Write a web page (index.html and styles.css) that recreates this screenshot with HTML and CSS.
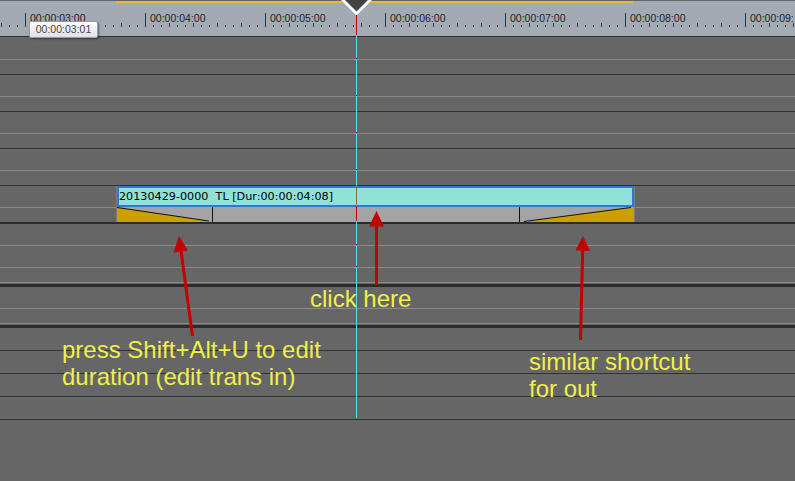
FILE: index.html
```html
<!DOCTYPE html>
<html lang="en">
<head>
  <meta charset="UTF-8">
  <meta name="viewport" content="width=device-width, initial-scale=1.0">
  <title>Timeline - trans in</title>
  <link rel="stylesheet" href="styles.css">
</head>
<body>
  <div class="editor">
    <div class="ruler">
      <div class="ruler-range"></div>
      <div class="ruler-scale">
        <div class="sec"></div>
        <div class="sec"><span>00:00:03:00</span></div>
        <div class="sec"><span>00:00:04:00</span></div>
        <div class="sec"><span>00:00:05:00</span></div>
        <div class="sec"><span>00:00:06:00</span></div>
        <div class="sec"><span>00:00:07:00</span></div>
        <div class="sec"><span>00:00:08:00</span></div>
        <div class="sec sec-last"><span>00:00:09:</span></div>
      </div>
    </div>
    <div class="time-tip">00:00:03:01</div>

    <div class="tracks">
      <div class="track track-first">
        <div class="lane"></div>
        <div class="lane lane-sub"></div>
      </div>
      <div class="track">
        <div class="lane"></div>
        <div class="lane lane-sub"></div>
      </div>
      <div class="track">
        <div class="lane"></div>
        <div class="lane lane-sub"></div>
      </div>
      <div class="track">
        <div class="lane"></div>
        <div class="lane lane-sub"></div>
      </div>

      <!-- pista con el clip -->
      <div class="track track-clip">
        <div class="lane"></div>
        <div class="lane lane-sub"></div>
        <div class="clip">
          <div class="clip-body">20130429-0000&nbsp; TL [Dur:00:00:04:08]</div>
          <div class="clip-trans">
            <div class="trans-in">
              <svg width="95" height="15" viewBox="0 0 95 15">
                <polygon points="0,0 0,15 93,15" fill="#c9a100"/>
                <line x1="0" y1="0.5" x2="92" y2="14" stroke="#111" stroke-width="1"/>
              </svg>
            </div>
            <div class="trans-mid"></div>
            <div class="trans-out">
              <svg width="114" height="15" viewBox="0 0 114 15">
                <polygon points="4,15 111,0 114,0 114,15" fill="#c9a100"/>
                <line x1="4" y1="14.5" x2="111" y2="0.5" stroke="#111" stroke-width="1"/>
              </svg>
            </div>
          </div>
        </div>
      </div>

      <div class="track track-group">
        <div class="lane"></div>
        <div class="lane"></div>
        <div class="lane lane-sub"></div>
      </div>
      <div class="track track-group">
        <div class="lane"></div>
        <div class="lane lane-sub"></div>
      </div>

      <div class="track track-thin"></div>
      <div class="track track-thin"></div>
      <div class="track track-thin"></div>
      <div class="track track-thin"></div>
    </div>

    <div class="note note-click">click here</div>
    <div class="note note-in">press Shift+Alt+U to edit<br>duration (edit trans in)</div>
    <div class="note note-out">similar shortcut<br>for out</div>

    <svg class="overlay" width="795" height="481" viewBox="0 0 795 481">
      <!-- cursor de reproduccion -->
      <polygon points="341,0 372,0 356.5,15.5" fill="#fff"/>
      <polygon points="345,0 368,0 356.5,11.5" fill="#434343"/>
      <rect x="356" y="15" width="1" height="20" fill="#c00000"/>
      <rect x="356" y="36" width="1" height="149" fill="#4fe6e6"/>
      <rect x="356" y="185" width="1" height="2" fill="#3fae6a"/>
      <rect x="356" y="187" width="1" height="17" fill="#7e6c44"/>
      <rect x="356" y="204" width="1" height="2" fill="#3fae6a"/>
      <rect x="356" y="206" width="1" height="15" fill="#c00000"/>
      <rect x="356" y="221" width="1" height="197" fill="#4fe6e6"/>
      <g fill="#b00000">
        <rect x="356" y="58" width="1" height="1"/>
        <rect x="356" y="95" width="1" height="1"/>
        <rect x="356" y="132" width="1" height="1"/>
        <rect x="356" y="169" width="1" height="1"/>
        <rect x="356" y="244" width="1" height="1"/>
        <rect x="356" y="266" width="1" height="1"/>
      </g>

      <!-- flechas -->
      <g stroke="#c40000" stroke-width="3" fill="none">
        <line x1="192.5" y1="336" x2="180.9" y2="250"/>
        <line x1="376.5" y1="285" x2="376.5" y2="225"/>
        <line x1="580.5" y1="340" x2="582.7" y2="249"/>
      </g>
      <g fill="#c40000">
        <polygon points="179,236 188,250.5 173.5,252.5"/>
        <polygon points="376.5,211 384,226.5 369,226.5"/>
        <polygon points="583,236 590,251 575.5,250.5"/>
      </g>
    </svg>
  </div>
</body>
</html>
```

FILE: styles.css
```css
html, body {
  margin: 0;
  padding: 0;
  background-color: #666;
  overflow: hidden;
}
.editor {
  position: relative;
  width: 795px;
  height: 481px;
  overflow: hidden;
  background-color: #666;
  font-family: "Liberation Sans", Arial, sans-serif;
}

/* regla de tiempo */
.ruler {
  height: 35px;
  border-bottom: 1px solid #2e2e2e;
  background-color: #a2abb4;
}
.ruler-range {
  margin-left: 116px;
  margin-top: 1px;
  width: 517px;
  height: 2px;
  background-color: #f2b33d;
}
.ruler-scale {
  display: flex;
  margin-top: 10px;
  margin-left: -95px;
  height: 14px;
}
.sec {
  flex: none;
  box-sizing: border-box;
  width: 120px;
  height: 14px;
  border-left: 1px solid #333;
  padding-left: 4px;
  background:
    repeating-linear-gradient(to right, #3a3a3a 0 1px, transparent 1px 24px) 23px 100% / 100% 4px no-repeat,
    repeating-linear-gradient(to right, #3a3a3a 0 1px, transparent 1px 8px) 7px 100% / 100% 2px no-repeat;
}
.sec-last {
  width: 50px;
}
.sec span {
  display: block;
  font-size: 10.5px;
  line-height: 10px;
  color: #222;
  white-space: nowrap;
}
.time-tip {
  position: absolute;
  left: 29px;
  top: 21px;
  z-index: 2;
  box-sizing: border-box;
  width: 69px;
  height: 17px;
  border: 1px solid #9c9c9c;
  border-radius: 2px;
  background: linear-gradient(#ffffff, #e0e0ea);
  box-shadow: 1px 1px 2px rgba(0, 0, 0, 0.45);
  font-size: 10.5px;
  line-height: 15px;
  text-align: center;
  color: #444;
}

/* pistas */
.track {
  border-bottom: 1px solid #333;
}
.lane {
  height: 21px;
  border-bottom: 1px solid #8a8a8a;
}
.lane-sub {
  height: 14px;
  border-bottom: none;
}
.track-first .lane:first-child {
  height: 22px;
}
.track-clip {
  position: relative;
  border-bottom: 2px solid #2c2c2c;
}
.track-group {
  border-bottom: 3px solid #2c2c2c;
}
.track-group .lane-sub {
  border-bottom: 1px solid #8a8a8a;
  margin-bottom: 1px;
}
.track-thin {
  height: 22px;
}

/* clip */
.clip {
  position: absolute;
  left: 116px;
  top: 0;
  width: 517px;
  height: 36px;
  border-left: 1px solid #7c7c7c;
  border-right: 1px solid #7c7c7c;
}
.clip-body {
  height: 17px;
  border: 2px solid #2a7ad6;
  background-color: #90e2d8;
  font-family: "DejaVu Sans", Verdana, sans-serif;
  font-size: 11.2px;
  line-height: 17px;
  color: #000;
  white-space: nowrap;
  overflow: hidden;
}
.clip-trans {
  display: flex;
  height: 15px;
  background-color: #a4a4a4;
}
.trans-in {
  width: 95px;
  border-right: 1px solid #111;
}
.trans-mid {
  flex: 1;
  border-right: 1px solid #111;
}
.trans-out {
  width: 114px;
}
.clip-trans svg {
  display: block;
}

/* notas */
.note {
  position: absolute;
  font-size: 24px;
  line-height: 27px;
  color: #f0f04a;
  white-space: nowrap;
}
.note-click {
  left: 310px;
  top: 285px;
}
.note-in {
  left: 62px;
  top: 336px;
}
.note-out {
  left: 529px;
  top: 348px;
}
.overlay {
  position: absolute;
  top: 0;
  left: 0;
  z-index: 3;
  pointer-events: none;
}
```
